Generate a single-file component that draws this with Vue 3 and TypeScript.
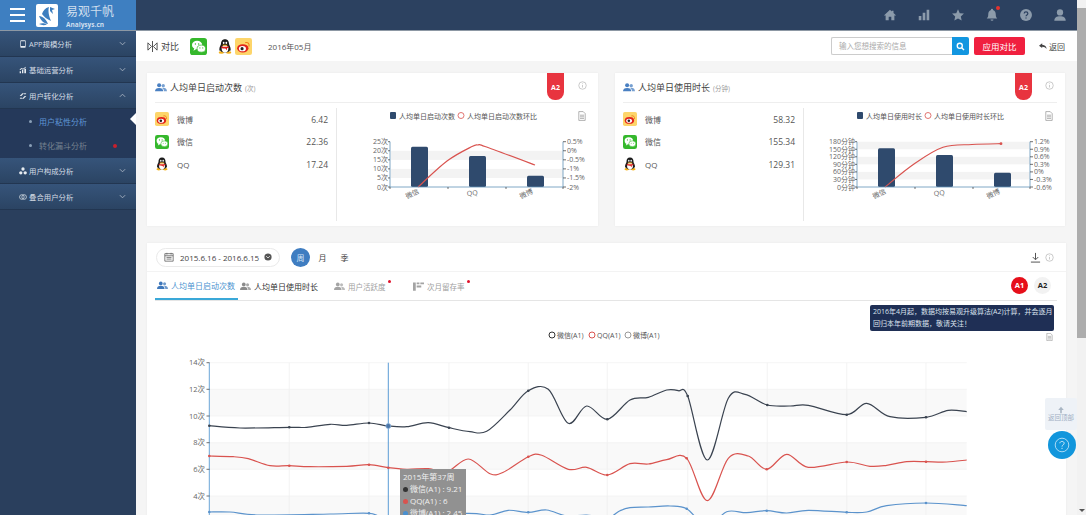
<template>
  <div class="page">
    <!-- icon sprite -->
    <svg class="sprite" aria-hidden="true">
      <symbol id="i-wechat" viewBox="0 0 24 24">
        <rect width="24" height="24" rx="4" fill="#35b82c" />
        <ellipse cx="10" cy="10" rx="7.2" ry="6" fill="#fff" />
        <path d="M6 14l-1 4 4-2.5z" fill="#fff" />
        <ellipse cx="16" cy="15" rx="6" ry="5" fill="#fff" stroke="#35b82c" stroke-width="1" />
        <circle cx="7.6" cy="8.4" r="1" fill="#35b82c" />
        <circle cx="12.2" cy="8.4" r="1" fill="#35b82c" />
        <circle cx="14" cy="14" r=".8" fill="#35b82c" />
        <circle cx="18" cy="14" r=".8" fill="#35b82c" />
      </symbol>
      <symbol id="i-qq" viewBox="0 0 24 24">
        <ellipse cx="6.5" cy="21" rx="4" ry="2" fill="#f5b21a" />
        <ellipse cx="17.5" cy="21" rx="4" ry="2" fill="#f5b21a" />
        <path d="M12 1C7.5 1 6 4.5 6 8c0 2-2.5 4.5-2.5 8 0 2 1 3 1.500 2 .5 2 3.500 3 7 3s6.500-1 7-3c.5 1 1.500 0 1.500-2 0-3.500-2.500-6-2.500-8 0-3.500-1.500-7-6-7z" fill="#1b1b1b" />
        <ellipse cx="12" cy="15.5" rx="5" ry="5.5" fill="#fff" />
        <ellipse cx="10" cy="6.5" rx="1.3" ry="1.8" fill="#fff" />
        <ellipse cx="14" cy="6.5" rx="1.3" ry="1.8" fill="#fff" />
        <path d="M8 9.5h8l-1 1.500H9z" fill="#f5b21a" />
        <path d="M6.500 11.500c3 1.300 8 1.300 11 0l.5 2-3 1v3l-2.500-2.500c-2 .2-4-.2-6-.8z" fill="#e0201c" />
      </symbol>
      <symbol id="i-weibo" viewBox="0 0 24 24">
        <rect width="24" height="24" rx="3" fill="#fdd56a" />
        <ellipse cx="11" cy="14.5" rx="8" ry="5.8" fill="#e2231a" />
        <ellipse cx="10.5" cy="15" rx="5" ry="3.6" fill="#fff" />
        <circle cx="10" cy="15" r="2.2" fill="#222" />
        <path d="M15 6.500c3-.8 5.500 1.500 4.800 5" fill="none" stroke="#ef7d1a" stroke-width="1.5" stroke-linecap="round" />
      </symbol>
      <symbol id="i-users" viewBox="0 0 16 12">
        <circle cx="5.5" cy="3" r="2.7" />
        <path d="M0 11c0-3 2-4.500 5.500-4.500S11 8 11 11z" />
        <circle cx="11" cy="3.5" r="2.2" opacity=".75" />
        <path d="M9.500 6.500c3.500-.5 6.500.8 6.500 4.500h-4c0-2-.8-3.500-2.500-4.500z" opacity=".75" />
      </symbol>
      <symbol id="i-rows" viewBox="0 0 12 9">
        <path d="M0 0h3v9H0zM4 0h3v2H4zM8 0h4v2H8zM4 3.500h5v2H4z" />
      </symbol>
      <symbol id="i-phone" viewBox="0 0 12 12">
        <path d="M3 .5h6a1 1 0 0 1 1 1v9a1 1 0 0 1-1 1H3a1 1 0 0 1-1-1v-9a1 1 0 0 1 1-1zm0 1.500v7h6V2z" />
      </symbol>
      <symbol id="i-stat" viewBox="0 0 12 12">
        <path d="M1 8h2v3H1zM4.500 6h2v5h-2zM8 4h2.500v7H8zM1 5l3-2 2 1 4-3 .5 1L6 5.500l-2-1-2.500 1.800z" />
      </symbol>
      <symbol id="i-convert" viewBox="0 0 12 12">
        <path d="M1 6l4-4h2.500L3.500 6zM11 6l-4 4H4.500l4-4zM7 2h4L9 4zM5 10H1l2-2z" />
      </symbol>
      <symbol id="i-nodes" viewBox="0 0 12 12">
        <circle cx="6" cy="3" r="2.5" /><circle cx="2.7" cy="8.8" r="2.5" /><circle cx="9.3" cy="8.8" r="2.5" />
      </symbol>
      <symbol id="i-merge" viewBox="0 0 12 12">
        <circle cx="4.3" cy="6" r="3.5" fill="none" stroke="currentColor" stroke-width="1" />
        <circle cx="7.7" cy="6" r="3.5" fill="none" stroke="currentColor" stroke-width="1" />
      </symbol>
      <symbol id="i-doc" viewBox="0 0 10 12">
        <path d="M1 .5h5.500L9 3v8.500H1zM2.500 5h5M2.500 7h5M2.500 9h5" fill="none" stroke="#888" stroke-width=".8" />
      </symbol>
      <symbol id="i-info" viewBox="0 0 12 12">
        <circle cx="6" cy="6" r="5" fill="none" stroke="#b9b9b9" stroke-width="1" />
        <path d="M6 3.200v1M6 5.300v3.400" stroke="#b9b9b9" stroke-width="1" />
      </symbol>
    </svg>

    <div class="shell">
      <header class="topbar">
        <div class="brand">
          <div class="burger"><i></i><i></i><i></i></div>
          <div class="logo">
            <svg viewBox="0 0 22 23" width="22" height="23">
              <rect width="22" height="23" rx="2" fill="#fff" />
              <path d="M3 12c4 .5 7 3 9 8-4-.5-7-3-9-8zM3 20c3-1 5-1 8 .5-3 1-5 .8-8-.5z" fill="#3d7ebf" />
              <path d="M6 10c1-3 3-6 7-7-1 3-.5 8 2 14-4-2-7-4-9-7z" fill="#3d7ebf" />
              <path d="M14 3l5 2-3 1 1 4-3-3z" fill="#3d7ebf" />
            </svg>
          </div>
          <div class="brand-text">
            <div class="brand-name">易观千帆</div>
            <div class="brand-site">Analysys.cn</div>
          </div>
        </div>
        <nav class="top-icons">
          <svg viewBox="0 0 16 16"><path d="M8 2L1 8.500h2V14h3.500v-4h3v4H13V8.500h2l-3-2.700V3h-2v1z" /></svg>
          <svg viewBox="0 0 16 16"><path d="M2 9h3v5H2zM6.500 5.500h3V14h-3zM11 2h3v12h-3z" /></svg>
          <svg viewBox="0 0 16 16"><path d="M8 1.500l2 4.400 4.800.5-3.600 3.200 1 4.700L8 11.900l-4.200 2.400 1-4.700L1.200 6.400 6 5.900z" /></svg>
          <span class="bell">
            <svg viewBox="0 0 16 16"><path d="M8 1a1.200 1.200 0 0 1 1.200 1.300C11.500 3 12.300 5 12.300 7.500c0 2.500.7 3.500 1.700 4.500H2c1-1 1.700-2 1.700-4.500C3.700 5 4.500 3 6.800 2.300A1.200 1.200 0 0 1 8 1zM6.300 13h3.400a1.700 1.700 0 0 1-3.400 0z" /></svg>
          </span>
          <svg viewBox="0 0 16 16">
            <circle cx="8" cy="8" r="6.8" />
            <path d="M5.900 6.300C6 3.900 10.100 4 10.100 6.300c0 1.700-2.100 1.600-2.100 3.200M8 10.800v1.300" fill="none" stroke="#2c4160" stroke-width="1.4" />
          </svg>
          <svg viewBox="0 0 16 16"><circle cx="8" cy="5" r="3.6" /><path d="M1.500 14.500c0-3.500 2.500-5 6.500-5s6.500 1.500 6.500 5z" /></svg>
        </nav>
      </header>

      <div class="body">
        <aside class="sidebar">
          <template v-for="item in menu" :key="item.label">
            <div class="menu-row">
              <svg class="menu-icon"><use :href="`#${item.icon}`" /></svg>
              <span>{{ item.label }}</span>
              <svg class="chev" viewBox="0 0 8 5">
                <path :d="item.children ? 'M1 4l3-3 3 3' : 'M1 1l3 3 3-3'" fill="none" stroke="currentColor" stroke-width="1" />
              </svg>
            </div>
            <div v-if="item.children" class="submenu">
              <div
                v-for="(child, i) in item.children"
                :key="child"
                class="sub-row"
                :class="{ active: i === 0 }"
              >
                <i class="sub-dot"></i>{{ child }}
                <i v-if="i === 1" class="sub-flag"></i>
              </div>
            </div>
          </template>
        </aside>

        <main class="main">
          <div class="toolbar">
            <div class="compare">
              <svg viewBox="0 0 12 12" width="11" height="11">
                <path d="M6 0v12M1 2l4 4-4 4zM11 2L7 6l4 4z" fill="none" stroke="#444" stroke-width="1" />
              </svg>
              对比
            </div>
            <svg class="app-wechat"><use href="#i-wechat" /></svg>
            <svg class="app-qq"><use href="#i-qq" /></svg>
            <svg class="app-weibo"><use href="#i-weibo" /></svg>
            <span class="month">2016年05月</span>
            <div class="search">
              <span class="search-input">输入您想搜索的信息</span>
              <span class="search-btn">
                <svg viewBox="0 0 10 10" width="9" height="9">
                  <circle cx="4.2" cy="4.2" r="2.8" fill="none" stroke="#fff" stroke-width="1.5" />
                  <path d="M6.300 6.300l2.600 2.600" stroke="#fff" stroke-width="1.5" />
                </svg>
              </span>
            </div>
            <button class="apply">应用对比</button>
            <span class="back">
              <svg viewBox="0 0 10 8" width="8" height="7"><path d="M4 0L0 3l4 3V4.200c2.500 0 4 .8 5.500 3C9.300 4 7.500 2 4 1.800z" fill="#444" /></svg>
              返回
            </span>
          </div>

          <div class="content">
            <div class="cards">
              <section v-for="card in cards" :key="card.title" class="card">
                <div class="card-head">
                  <svg class="users"><use href="#i-users" /></svg>
                  <span class="card-title">{{ card.title }}</span>
                  <span class="card-unit">({{ card.unit }})</span>
                  <span class="ribbon">A2</span>
                  <svg class="info"><use href="#i-info" /></svg>
                </div>
                <div class="card-body">
                  <ul class="apps">
                    <li v-for="row in card.rows" :key="row.name">
                      <svg class="app-icon"><use :href="`#${row.icon}`" /></svg>
                      <span class="app-name">{{ row.name }}</span>
                      <span class="app-value">{{ row.value }}</span>
                    </li>
                  </ul>
                  <svg class="mini-chart" viewBox="0 0 253 113" width="253" height="113">
                    <rect x="53" y="4" width="6" height="7" rx="1" fill="#2f4a6d" />
                    <text x="62" y="10.5" class="lg">{{ card.title }}</text>
                    <circle cx="124" cy="7.5" r="3" fill="#fff" stroke="#d9534f" stroke-width=".8" />
                    <text x="130" y="10.5" class="lg">{{ card.title }}环比</text>
                    <use href="#i-doc" x="241" y="3" width="8" height="10" />

                    <rect
                      v-for="b in card.bands"
                      :key="b"
                      x="54"
                      :y="b"
                      width="172"
                      :height="card.step"
                      fill="#f3f3f3"
                    />
                    <rect
                      v-for="b in card.bars"
                      :key="b.x"
                      :x="b.x"
                      :y="b.y"
                      width="17"
                      :height="79 - b.y"
                      rx="1.5"
                      fill="#2f4a6d"
                    />
                    <path :d="card.line" fill="none" stroke="#d9534f" stroke-width="1.2" />
                    <circle v-if="card.endDot" cx="197" cy="35.7" r="1.4" fill="#d9534f" />
                    <path d="M53 33.700V79H226V33.700" fill="none" stroke="#5f93b8" stroke-width=".8" />
                    <path d="M53 79v2M111 79v2M169 79v2M226 79v2" stroke="#333" stroke-width=".7" />
                    <template v-for="(t, i) in card.left" :key="t">
                      <text x="51" :y="tickY(card, i) + 2.5" class="tick" text-anchor="end">{{ t }}</text>
                      <path :d="`M51 ${tickY(card, i)}h2`" stroke="#333" stroke-width=".7" />
                    </template>
                    <template v-for="(t, i) in card.right" :key="t">
                      <text x="230" :y="tickY(card, i) + 2.5" class="tick">{{ t }}</text>
                      <path :d="`M226 ${tickY(card, i)}h3`" stroke="#333" stroke-width=".7" />
                    </template>
                    <text transform="translate(70 91) rotate(-25)" class="tick">微信</text>
                    <text transform="translate(130 88) rotate(-5)" class="tick">QQ</text>
                    <text transform="translate(184 91) rotate(-25)" class="tick">微博</text>
                  </svg>
                </div>
              </section>
            </div>

            <section class="panel">
              <div class="panel-top">
                <div class="range">
                  <svg viewBox="0 0 12 12" width="10" height="10">
                    <path d="M1 2h10v9H1zM1 4.500h10M3.500 1v2M8.500 1v2M3 6.500h6M3 8.500h6" fill="none" stroke="#666" stroke-width="1" />
                  </svg>
                  <span class="range-text">2015.6.16 - 2016.6.15</span>
                  <svg viewBox="0 0 10 10" width="8" height="8">
                    <circle cx="5" cy="5" r="4.5" fill="#555" />
                    <path d="M2.800 4l2.200 2.200L7.200 4" fill="none" stroke="#fff" stroke-width="1" />
                  </svg>
                </div>
                <span class="period on">周</span>
                <span class="period">月</span>
                <span class="period">季</span>
                <svg class="download" viewBox="0 0 12 12" width="11" height="11">
                  <path d="M6 1v7M3 5.500L6 8.500l3-3M1 11h10" fill="none" stroke="#444" stroke-width="1" />
                </svg>
                <svg class="info"><use href="#i-info" /></svg>
              </div>

              <div class="tabs">
                <div v-for="(tab, i) in tabs" :key="tab.label" class="tab" :class="[tab.kind, { first: i === 0 }]">
                  <svg class="tab-icon"><use :href="`#${tab.icon}`" /></svg>
                  <span>{{ tab.label }}</span>
                  <i v-if="tab.kind === 'muted'" class="tab-flag"></i>
                </div>
                <span class="algo a1">A1</span>
                <span class="algo a2">A2</span>
              </div>

              <div class="plot">
                <div class="notice">
                  2016年4月起，数据均按易观升级算法(A2)计算，并会逐月<br />回归本年前期数据，敬请关注！
                </div>
                <svg class="plot-doc"><use href="#i-doc" /></svg>
                <svg viewBox="147 301 919 214" width="919" height="214">
                  <g v-for="l in lineLegend" :key="l.name">
                    <circle :cx="l.x" cy="335" r="3" fill="#fff" :stroke="l.color" stroke-width="1" />
                    <text :x="l.x + 5" y="338" class="lg">{{ l.name }}</text>
                  </g>

                  <rect x="209.3" y="389.3" width="757.4" height="26.7" fill="#f9f9f9" />
                  <rect x="209.3" y="442.7" width="757.4" height="26.7" fill="#f9f9f9" />
                  <rect x="209.3" y="496" width="757.4" height="19" fill="#f9f9f9" />
                  <path v-for="x in gridX" :key="x" :d="`M${x} 362.7V515`" stroke="#efefef" stroke-width=".7" />
                  <path v-for="y in gridY" :key="y" :d="`M209.3 ${y}H966.7`" stroke="#f0f0f0" stroke-width=".7" />

                  <path d="M209.300 362.700V515" stroke="#6ba5d8" stroke-width="1" />
                  <g v-for="t in yTicks" :key="t.label">
                    <text x="205" :y="t.y + 2.5" class="tick big" text-anchor="end">{{ t.label }}</text>
                    <path :d="`M206.500 ${t.y}h3`" stroke="#333" stroke-width=".7" />
                  </g>
                  <path d="M388.300 362.700V515" stroke="#5b9bd5" stroke-width="1" />

                  <g v-for="s in series" :key="s.color">
                    <path :d="s.d" fill="none" :stroke="s.color" stroke-width="1.2" />
                    <circle v-for="p in s.marks" :key="p[0]" :cx="p[0]" :cy="p[1]" r="1.3" :fill="s.color" />
                  </g>
                  <circle cx="388.3" cy="426" r="2.5" fill="#4b76a8" stroke="#8fb4dc" stroke-width=".7" />
                </svg>
                <div class="tip">
                  <div>2015年第37周</div>
                  <div v-for="t in tipRows" :key="t.text">
                    <i :style="{ background: t.color }"></i>{{ t.text }}
                  </div>
                </div>
              </div>
            </section>
          </div>

          <div class="to-top">
            <svg viewBox="0 0 10 10" width="8" height="8"><path d="M5 1L1.500 5H4v4h2V5h2.500z" fill="#a9b6c4" /></svg>
            <span>返回顶部</span>
          </div>
          <div class="help">
            <svg viewBox="0 0 20 20" width="16" height="16">
              <circle cx="10" cy="10" r="8.5" fill="none" stroke="#cfeafa" stroke-width="1" />
              <path d="M7.300 7.800C7.500 4.700 12.700 4.900 12.700 7.800c0 2.200-2.700 2-2.700 4.200M10 13.500v1.500" fill="none" stroke="#cfeafa" stroke-width="1.2" />
            </svg>
          </div>
        </main>
      </div>
    </div>

    <div class="scrollbar"><div class="thumb"></div><i class="arrow"></i></div>
  </div>
</template>

<script setup lang="ts">
type Pt = [number, number]

interface Card {
  title: string
  unit: string
  rows: { name: string; value: string; icon: string }[]
  left: string[]
  right: string[]
  step: number
  bands: number[]
  bars: { x: number; y: number }[]
  line: string
  endDot: boolean
}

// catmull-rom through the points, good enough for echarts' smooth lines
function smooth(pts: Pt[]): string {
  let d = `M${pts[0][0]} ${pts[0][1]}`
  for (let i = 0; i < pts.length - 1; i++) {
    const p0 = pts[i - 1] || pts[i]
    const p1 = pts[i]
    const p2 = pts[i + 1]
    const p3 = pts[i + 2] || p2
    const c1x = p1[0] + (p2[0] - p0[0]) / 6
    const c1y = p1[1] + (p2[1] - p0[1]) / 6
    const c2x = p2[0] - (p3[0] - p1[0]) / 6
    const c2y = p2[1] - (p3[1] - p1[1]) / 6
    d += `C${c1x.toFixed(1)} ${c1y.toFixed(1)} ${c2x.toFixed(1)} ${c2y.toFixed(1)} ${p2[0]} ${p2[1]}`
  }
  return d
}

const tickY = (card: Card, i: number) => 79 - (card.left.length - 1 - i) * card.step

const menu: { label: string; icon: string; children?: string[] }[] = [
  { label: 'APP规模分析', icon: 'i-phone' },
  { label: '基础运营分析', icon: 'i-stat' },
  { label: '用户转化分析', icon: 'i-convert', children: ['用户粘性分析', '转化漏斗分析'] },
  { label: '用户构成分析', icon: 'i-nodes' },
  { label: '叠合用户分析', icon: 'i-merge' }
]

const cards: Card[] = [
  {
    title: '人均单日启动次数',
    unit: '次',
    rows: [
      { name: '微博', value: '6.42', icon: 'i-weibo' },
      { name: '微信', value: '22.36', icon: 'i-wechat' },
      { name: 'QQ', value: '17.24', icon: 'i-qq' }
    ],
    left: ['25次', '20次', '15次', '10次', '5次', '0次'],
    right: ['0.5%', '0%', '-0.5%', '-1%', '-1.5%', '-2%'],
    step: 9.06,
    bands: [42.8, 60.9],
    bars: [{ x: 74, y: 38.7 }, { x: 132, y: 48 }, { x: 190, y: 67.7 }],
    line: smooth([[81, 79], [110, 53], [135, 38.5], [141, 37], [148, 38.5], [198, 57]]),
    endDot: false
  },
  {
    title: '人均单日使用时长',
    unit: '分钟',
    rows: [
      { name: '微博', value: '58.32', icon: 'i-weibo' },
      { name: '微信', value: '155.34', icon: 'i-wechat' },
      { name: 'QQ', value: '129.31', icon: 'i-qq' }
    ],
    left: ['180分钟', '150分钟', '120分钟', '90分钟', '60分钟', '30分钟', '0分钟'],
    right: ['1.2%', '0.9%', '0.6%', '0.3%', '0%', '-0.3%', '-0.6%'],
    step: 7.55,
    bands: [33.7, 48.8, 63.9],
    bars: [{ x: 74, y: 40.3 }, { x: 132, y: 47 }, { x: 190, y: 64.7 }],
    line: smooth([[81, 79], [110, 56], [139, 39.3], [168, 36.5], [197, 35.7]]),
    endDot: true
  }
]

const tabs = [
  { label: '人均单日启动次数', icon: 'i-users', kind: 'active' },
  { label: '人均单日使用时长', icon: 'i-users', kind: 'normal' },
  { label: '用户活跃度', icon: 'i-users', kind: 'muted' },
  { label: '次月留存率', icon: 'i-rows', kind: 'muted' }
]

const lineLegend = [
  { name: '微信(A1)', color: '#333', x: 552 },
  { name: 'QQ(A1)', color: '#d9534f', x: 592 },
  { name: '微博(A1)', color: '#999', x: 628 }
]

const yTicks = [
  { label: '14次', y: 362.7 },
  { label: '12次', y: 389.3 },
  { label: '10次', y: 416 },
  { label: '8次', y: 442.7 },
  { label: '6次', y: 469.3 },
  { label: '4次', y: 496 }
]

const gridX = [289.3, 369, 449, 528.3, 607.3, 687.7, 767.3, 846.7, 926]
const gridY = [362.7, 389.3, 416, 442.7, 469.3, 496]

const blackPts: Pt[] = [
  [209.3, 425.7], [240, 428], [289.3, 427.3], [306.7, 427.3], [330, 424.3], [346.7, 425.3], [369, 423],
  [388.3, 426], [406.7, 426.7], [428.3, 422.7], [449, 427.7], [470, 431.7], [486.7, 431.3], [510, 410],
  [528.3, 390.7], [548.3, 389.3], [568.3, 423.3], [586.7, 406], [607.3, 419.3], [630, 400], [648.3, 397.3],
  [666.7, 390], [678.3, 390.7], [687.7, 396], [707.3, 460], [728.3, 398.3], [745, 394.3], [767.3, 405],
  [790, 406], [808.3, 405.3], [846.7, 414.7], [866.7, 403.3], [890, 416.7], [926, 417.3], [948.3, 410.3],
  [966.7, 411.7]
]
const redPts: Pt[] = [
  [209.3, 456], [233.3, 456.7], [248.3, 458.7], [270, 465.7], [289.3, 465.7], [310, 466.7], [346.7, 466.3],
  [369, 464.7], [388.3, 467.7], [406.7, 469.3], [428.3, 468.7], [446.7, 472], [468.3, 459], [490, 473.7],
  [503.3, 472.3], [528.3, 456.7], [541.7, 455.3], [568.3, 469.3], [586.7, 467.3], [607.3, 475], [630, 463.7],
  [648.3, 464], [666.7, 459.7], [686.7, 458.3], [707.3, 500.7], [728.3, 458.3], [748.3, 456], [766.7, 469.3],
  [786.7, 454.3], [808.3, 467.3], [846.7, 462], [870, 466.3], [886.7, 465.3], [906.7, 461.7], [926, 461.7],
  [946.7, 462], [966.7, 460]
]
const bluePts: Pt[] = [
  [209.3, 512], [230, 512], [260, 515], [330, 514], [369, 513.3], [388.3, 516.7], [466.7, 513.3], [490, 515],
  [508.3, 510.3], [528.3, 512.3], [546.7, 510], [566.7, 516], [586.7, 515], [607.3, 518], [620, 510.7],
  [630, 507.7], [648.3, 507], [670, 506], [686.7, 508.7], [707.3, 526.7], [726.7, 511.7], [746.7, 512.7],
  [766.7, 510.7], [786.7, 513], [808.3, 510.3], [846.7, 512.3], [866.7, 512], [886.7, 505.7], [926, 503],
  [966.7, 505.7]
]

const markXs = [209.3, 289.3, 369, 388.3, 449, 528.3, 607.3, 687, 767, 846.7, 926]
const marks = (pts: Pt[]) => pts.filter(p => markXs.some(x => Math.abs(x - p[0]) < 1.5))

const series = [
  { color: '#3a4350', d: smooth(blackPts), marks: marks(blackPts) },
  { color: '#d9534f', d: smooth(redPts), marks: marks(redPts) },
  { color: '#5b93cc', d: smooth(bluePts), marks: marks(bluePts) }
]

const tipRows = [
  { color: '#333', text: '微信(A1) : 9.21' },
  { color: '#d9534f', text: 'QQ(A1) : 6' },
  { color: '#4a90d0', text: '微博(A1) : 2.45' }
]
</script>

<style>
html,
body {
  margin: 0;
  overflow: hidden;
}
</style>

<style scoped>
.page {
  display: flex;
  width: 1086px;
  height: 515px;
  overflow: hidden;
  font-family: "Open Sans", "Noto Sans CJK SC", sans-serif;
  color: #444;
  background: #f5f5f5;
}

.sprite {
  position: absolute;
  width: 0;
  height: 0;
}

.shell {
  flex: 1;
  min-width: 0;
  display: flex;
  flex-direction: column;
}

.scrollbar {
  width: 9px;
  display: flex;
  flex-direction: column;
  align-items: stretch;
  background: #f2f2f2;
  padding-top: 8px;
  box-sizing: border-box;
}

.thumb {
  height: 330px;
  background: #adadad;
}

.arrow {
  margin: auto auto 3px;
  border: 3px solid transparent;
  border-top-color: #555;
  border-bottom-width: 0;
}

/* top bar */
.topbar {
  height: 30px;
  flex: none;
  display: flex;
  background: #2c4160;
  border-bottom: 1px solid #8d98a4;
}

.brand {
  width: 136px;
  flex: none;
  display: flex;
  align-items: center;
  background: #3e7fc1;
  padding-left: 10px;
  box-sizing: border-box;
}

.burger {
  width: 15px;
  display: flex;
  flex-direction: column;
  gap: 4px;
}

.burger i {
  height: 2px;
  background: #fff;
}

.logo {
  margin-left: 11px;
  height: 23px;
}

.brand-text {
  margin: 4px 0 0 8px;
  color: #cfdeee;
}

.brand-name {
  font-size: 12px;
  line-height: 14px;
}

.brand-site {
  font-size: 6.5px;
  line-height: 9px;
  font-weight: 700;
  margin-top: 1px;
}

.top-icons {
  flex: 1;
  display: flex;
  justify-content: flex-end;
  align-items: center;
  gap: 20px;
  padding-right: 10px;
}

.top-icons svg {
  width: 14px;
  height: 14px;
  fill: #8c9bab;
  display: block;
}

.bell {
  position: relative;
}

.bell::after {
  content: "";
  position: absolute;
  right: -1px;
  top: -2px;
  width: 4px;
  height: 4px;
  border-radius: 50%;
  background: #e5322d;
}

/* sidebar */
.body {
  flex: 1;
  min-height: 0;
  display: flex;
}

.sidebar {
  width: 136px;
  flex: none;
  background: #2a3f5d;
}

.menu-row {
  height: 26px;
  box-sizing: border-box;
  display: flex;
  align-items: center;
  padding: 0 10px 0 19px;
  font-size: 7.4px;
  color: #d5dce5;
  background: linear-gradient(#36547a, #2b4463);
  border-bottom: 1px solid #223651;
}

.menu-icon {
  width: 8px;
  height: 8px;
  fill: #e6ebf0;
  color: #e6ebf0;
  margin-right: 2px;
  flex: none;
}

.chev {
  width: 7px;
  height: 5px;
  margin-left: auto;
  color: #aab6c4;
}

.submenu {
  height: 49px;
  background: #25395a;
}

.sub-row {
  position: relative;
  height: 22px;
  display: flex;
  align-items: center;
  padding-left: 29px;
  font-size: 8px;
  color: #74818f;
}

.sub-row.active {
  height: 25px;
  color: #5f97d6;
}

.sub-row.active::after {
  content: "";
  position: absolute;
  right: 0;
  top: 4px;
  border: 6px solid transparent;
  border-left-width: 0;
  border-right-color: #fff;
}

.sub-dot {
  width: 3px;
  height: 3px;
  border-radius: 50%;
  background: #8aa0b8;
  margin-right: 7px;
}

.sub-flag {
  position: absolute;
  left: 113px;
  top: 10px;
  width: 4px;
  height: 4px;
  border-radius: 50%;
  background: #c8202c;
}

/* main */
.main {
  position: relative;
  flex: 1;
  min-width: 0;
  display: flex;
  flex-direction: column;
}

.toolbar {
  height: 30px;
  flex: none;
  display: flex;
  align-items: center;
  background: #fff;
  padding: 0 12px 0 11px;
  box-sizing: border-box;
  font-size: 9px;
}

.compare {
  display: flex;
  align-items: center;
  gap: 3px;
  width: 43px;
  color: #444;
}

.app-wechat {
  width: 17px;
  height: 17px;
}

.app-qq {
  width: 16px;
  height: 17px;
  margin-left: 10px;
}

.app-weibo {
  width: 17px;
  height: 17px;
  margin-left: 2px;
}

.month {
  margin-left: 16px;
  font-size: 8px;
  color: #555;
}

.search {
  margin-left: auto;
  display: flex;
  width: 138px;
  height: 18px;
}

.search-input {
  flex: 1;
  border: 1px solid #ccc;
  border-right: 0;
  border-radius: 2px 0 0 2px;
  font-size: 7.5px;
  line-height: 16px;
  color: #aaa;
  padding-left: 7px;
}

.search-btn {
  width: 17px;
  display: flex;
  align-items: center;
  justify-content: center;
  background: #1296e0;
  border-radius: 0 2px 2px 0;
}

.apply {
  margin-left: 5px;
  width: 51px;
  height: 18px;
  padding: 0;
  border: 0;
  border-radius: 2px;
  background: #f0203f;
  color: #fff;
  font: inherit;
  font-size: 8.5px;
}

.back {
  margin-left: 14px;
  display: flex;
  align-items: center;
  gap: 2px;
  font-size: 8px;
}

.content {
  flex: 1;
  min-height: 0;
  padding: 12px 11px 0;
  overflow: hidden;
}

.cards {
  display: grid;
  grid-template-columns: 451px 450px;
  column-gap: 17px;
}

.card {
  height: 153px;
  box-sizing: border-box;
  background: #fff;
  padding: 0 8px;
  box-shadow: 0 0 2px rgba(0, 0, 0, 0.06);
}

.card-head {
  position: relative;
  height: 29px;
  display: flex;
  align-items: center;
  border-bottom: 1px solid #eee;
}

.users {
  width: 12px;
  height: 9px;
  fill: #4a80c2;
  margin-right: 3px;
  flex: none;
}

.card-title {
  font-size: 9px;
  color: #444;
}

.card-unit {
  margin-left: 3px;
  font-size: 6.5px;
  color: #999;
}

.ribbon {
  position: absolute;
  left: 392px;
  top: 0;
  width: 17px;
  height: 27px;
  background: #e8343f;
  border-radius: 0 0 8px 8px;
  color: #fff;
  font-size: 7px;
  font-weight: 700;
  line-height: 30px;
  text-align: center;
}

.info {
  width: 9px;
  height: 9px;
}

.card-head .info {
  position: absolute;
  right: 3px;
  top: 8px;
}

.card-body {
  display: flex;
  align-items: flex-start;
  padding-top: 5px;
}

.apps {
  list-style: none;
  margin: 0;
  padding: 0 8px 0 0;
  width: 173px;
  height: 113px;
  border-right: 1px solid #e8e8e8;
}

.apps li {
  height: 22.5px;
  display: flex;
  align-items: center;
  font-size: 8px;
}

.app-icon {
  width: 14px;
  height: 14px;
  flex: none;
}

.app-name {
  margin-left: 8px;
  color: #555;
}

.app-value {
  margin-left: auto;
  font-size: 8.5px;
  color: #555;
}

.mini-chart {
  flex: none;
}

.lg {
  font-size: 7px;
  fill: #555;
}

.tick {
  font-size: 7px;
  fill: #666;
}

.tick.big {
  font-size: 7.5px;
}

.panel {
  margin-top: 17px;
  height: 300px;
  width: 919px;
  background: #fff;
  box-shadow: 0 0 2px rgba(0, 0, 0, 0.06);
}

.panel-top {
  height: 29px;
  box-sizing: border-box;
  display: flex;
  align-items: center;
  padding: 0 12px 0 9px;
  font-size: 8px;
  border-bottom: 1px solid #f3f3f3;
}

.range {
  width: 124px;
  height: 19px;
  box-sizing: border-box;
  display: flex;
  align-items: center;
  border: 1px solid #eaeaea;
  border-radius: 10px;
  padding: 0 7px;
  margin-right: 11px;
  color: #444;
}

.range-text {
  margin: 0 auto 0 6px;
  font-size: 8px;
  white-space: nowrap;
}

.period {
  width: 19px;
  height: 19px;
  margin-right: 3px;
  border-radius: 50%;
  text-align: center;
  line-height: 19px;
}

.period.on {
  background: #3f7dc1;
  color: #d6e6f7;
}

.download {
  margin-left: auto;
  margin-right: 4px;
}

.tabs {
  position: relative;
  height: 29px;
  box-sizing: border-box;
  margin: 0 9px 0 8px;
  display: flex;
  align-items: center;
  border-bottom: 1px solid #e5e5e5;
  font-size: 8px;
}

.tab {
  position: relative;
  height: 28px;
  box-sizing: border-box;
  display: flex;
  align-items: center;
  white-space: nowrap;
}

.tab.first {
  width: 83px;
  padding-left: 2px;
  margin-right: 2px;
  color: #4b93d0;
  border-bottom: 2px solid #3aa8d8;
  fill: #3f78bb;
}

.tab.normal {
  width: 79px;
  margin-right: 15px;
  color: #333;
  fill: #8b8b8b;
}

.tab.muted {
  width: 79px;
  color: #a0a0a0;
  fill: #a4a4a4;
  font-size: 7.5px;
}

.tab-icon {
  width: 11px;
  height: 9px;
  margin-right: 3px;
  flex: none;
}

.tab-flag {
  position: absolute;
  left: 54px;
  top: 8px;
  width: 3px;
  height: 3px;
  border-radius: 50%;
  background: #e0102a;
}

.algo {
  position: absolute;
  top: 5px;
  width: 17px;
  height: 17px;
  border-radius: 50%;
  font-size: 7.5px;
  font-weight: 700;
  line-height: 17px;
  text-align: center;
}

.a1 {
  left: 856px;
  background: #e60f1a;
  color: #fff;
}

.a2 {
  left: 879px;
  background: #f2f2f2;
  color: #222;
}

.plot {
  position: relative;
  height: 214px;
}

.plot > svg:not(.plot-doc) {
  display: block;
}

.notice {
  position: absolute;
  left: 723px;
  top: 4px;
  width: 184px;
  height: 26px;
  box-sizing: border-box;
  padding: 1px 3px;
  background: #1f2f55;
  border-radius: 2px;
  color: #dbe2ee;
  font-size: 7px;
  line-height: 12px;
  white-space: nowrap;
}

.plot-doc {
  position: absolute;
  left: 899px;
  top: 32px;
  width: 7px;
  height: 8px;
}

.tip {
  position: absolute;
  left: 253px;
  top: 168px;
  width: 66px;
  height: 60px;
  padding: 2px 3px;
  box-sizing: border-box;
  background: #919191;
  color: #f0f0f0;
  font-size: 8px;
  line-height: 12px;
  white-space: nowrap;
}

.tip i {
  display: inline-block;
  width: 5px;
  height: 5px;
  border-radius: 50%;
  margin-right: 2px;
}

.to-top {
  position: absolute;
  right: 0;
  top: 367px;
  width: 32px;
  height: 32px;
  background: #eef2f7;
  border-radius: 2px;
  display: flex;
  flex-direction: column;
  align-items: center;
  justify-content: center;
  font-size: 6.5px;
  line-height: 8px;
  color: #9fb0c4;
}

.help {
  position: absolute;
  right: 1px;
  top: 400px;
  width: 28px;
  height: 28px;
  border-radius: 50%;
  background: #1296dc;
  display: flex;
  align-items: center;
  justify-content: center;
}
</style>
